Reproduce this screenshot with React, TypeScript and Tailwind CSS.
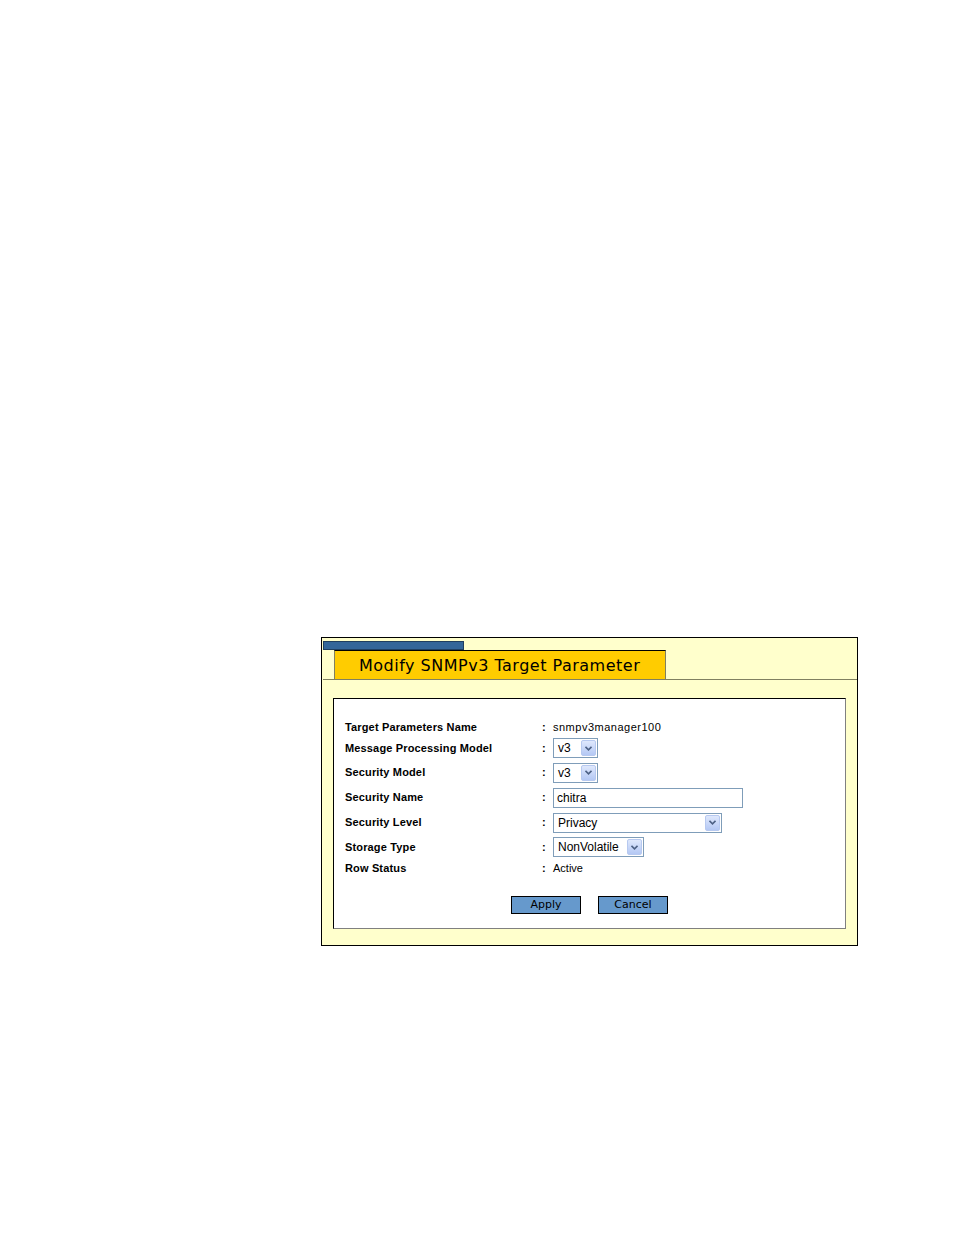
import React from 'react';

function Arrow() {
  return (
    <span className="flex h-[16px] w-[15px] items-center justify-center rounded-[2px] border border-[#b7c9f0] bg-gradient-to-b from-[#dfe8fc] to-[#b4c8f4]">
      <svg width="7" height="5" viewBox="0 0 7 5">
        <path d="M0.5 0.8 L3.5 3.8 L6.5 0.8" fill="none" stroke="#4d6185" strokeWidth="1.6" />
      </svg>
    </span>
  );
}

function Select({ value, width }: { value: string; width: string }) {
  return (
    <div className={`flex h-[20px] items-center justify-between border border-[#7f9db9] bg-white pl-[4px] pr-[1px] ${width}`}>
      <span className="text-[12px] text-black">{value}</span>
      <Arrow />
    </div>
  );
}

interface Row {
  label: string;
  value: React.ReactNode;
  h: string;
}

const rows: Row[] = [
  { label: 'Target Parameters Name', value: <span className="text-[11px] tracking-[0.5px]">snmpv3manager100</span>, h: 'h-[18px]' },
  { label: 'Message Processing Model', value: <Select value="v3" width="w-[45px]" />, h: 'h-[24px]' },
  { label: 'Security Model', value: <Select value="v3" width="w-[45px]" />, h: 'h-[25px]' },
  {
    label: 'Security Name',
    value: (
      <div className="flex h-[20px] w-[190px] items-center border border-[#7f9db9] bg-white pl-[3px] text-[12px]">chitra</div>
    ),
    h: 'h-[25px]',
  },
  { label: 'Security Level', value: <Select value="Privacy" width="w-[169px]" />, h: 'h-[25px]' },
  { label: 'Storage Type', value: <Select value="NonVolatile" width="w-[91px]" />, h: 'h-[24px]' },
  { label: 'Row Status', value: <span className="text-[11px]">Active</span>, h: 'h-[19px]' },
];

export default function App() {
  return (
    <div className="h-[1235px] w-[954px] bg-white pl-[321px] pt-[637px] font-['Liberation_Sans',Arial,sans-serif]">
      <div className="h-[309px] w-[537px] border border-black bg-[#ffffcc] pl-[1px] pt-[3px]">
        {/* title tab */}
        <div className="h-[9px] w-[141px] border border-[#1f3f5f] bg-[#336699]" />
        <div className="flex">
          <div className="w-[11px] border-b border-[#808060]" />
          <div className="flex h-[30px] w-[332px] items-center border border-[#808060] border-t-black border-l-[#808060] bg-[#ffcc00] pl-[24px] pt-[1px] font-['DejaVu_Sans',Verdana,sans-serif] text-[16px] tracking-[0.5px] text-black">
            Modify SNMPv3 Target Parameter
          </div>
          <div className="flex-1 border-b border-[#808060]" />
        </div>

        {/* form panel */}
        <div className="ml-[10px] mt-[18px] h-[231px] w-[513px] border border-black border-r-[#808080] border-b-[#808080] bg-white px-[11px] pt-[19px]">
          {rows.map((r) => (
            <div key={r.label} className={`flex items-center ${r.h}`}>
              <span className="w-[197px] text-[11px] font-bold tracking-[0.15px] text-black">{r.label}</span>
              <span className="w-[11px] text-[11px] font-bold">:</span>
              {r.value}
            </div>
          ))}
          <div className="mt-[18px] flex gap-[17px] pl-[166px]">
            <button className="h-[18px] w-[70px] border border-black bg-[#6699cc] font-['DejaVu_Sans',Verdana,sans-serif] text-[11px] text-black">
              Apply
            </button>
            <button className="h-[18px] w-[70px] border border-black bg-[#6699cc] font-['DejaVu_Sans',Verdana,sans-serif] text-[11px] text-black">
              Cancel
            </button>
          </div>
        </div>
      </div>
    </div>
  );
}
